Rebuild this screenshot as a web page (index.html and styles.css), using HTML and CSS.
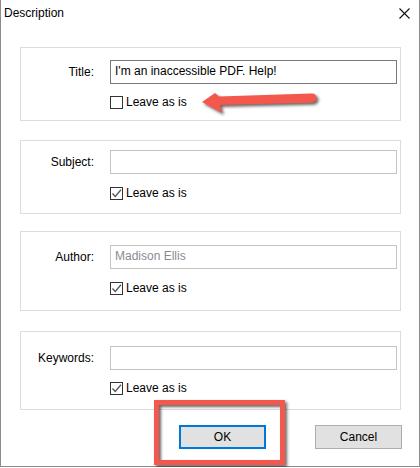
FILE: index.html
```html
<!DOCTYPE html>
<html>
<head>
<meta charset="utf-8">
<link rel="stylesheet" href="styles.css">
</head>
<body>
<div class="window">
  <div class="titlebar">
    <span class="title">Description</span>
    <svg class="close" width="11" height="11" viewBox="0 0 11 11"><path d="M0.5 0.5 L10.5 10.5 M10.5 0.5 L0.5 10.5" stroke="#111" stroke-width="1.1" fill="none"/></svg>
  </div>
  <div class="content">
    <div class="group g1">
      <span class="label">Title:</span>
      <div class="input input-active">I'm an inaccessible PDF. Help!</div>
      <div class="check-row"><span class="checkbox"></span><span>Leave as is</span></div>
    </div>
    <div class="group g2">
      <span class="label">Subject:</span>
      <div class="input"></div>
      <div class="check-row"><span class="checkbox"><svg width="11" height="11" viewBox="0 0 11 11"><path d="M1.5 5.5 L4.2 8.5 L10 1.8" stroke="#555" stroke-width="1.3" fill="none"/></svg></span><span>Leave as is</span></div>
    </div>
    <div class="group g3">
      <span class="label">Author:</span>
      <div class="input input-disabled">Madison Ellis</div>
      <div class="check-row"><span class="checkbox"><svg width="11" height="11" viewBox="0 0 11 11"><path d="M1.5 5.5 L4.2 8.5 L10 1.8" stroke="#555" stroke-width="1.3" fill="none"/></svg></span><span>Leave as is</span></div>
    </div>
    <div class="group g4">
      <span class="label">Keywords:</span>
      <div class="input"></div>
      <div class="check-row"><span class="checkbox"><svg width="11" height="11" viewBox="0 0 11 11"><path d="M1.5 5.5 L4.2 8.5 L10 1.8" stroke="#555" stroke-width="1.3" fill="none"/></svg></span><span>Leave as is</span></div>
    </div>
    <div class="buttons">
      <button class="btn btn-default">OK</button>
      <button class="btn">Cancel</button>
    </div>
  </div>
  <div class="highlight"></div>
  <svg class="arrow" width="140" height="40" viewBox="190 80 140 40">
    <path d="M202 102 L215 93 L219 96.5 L312 93.5 A4.6 4.6 0 0 1 312 102.7 L220 105 L222 113 Z" fill="#f4574b"/>
  </svg>
</div>
</body>
</html>
```
FILE: styles.css
```css
* { box-sizing: border-box; }
html, body { margin: 0; padding: 0; background: #fff; }
body {
  font-family: "Liberation Sans", Arial, sans-serif;
  font-size: 12px;
  color: #000;
}
.window {
  position: relative;
  width: 420px;
  height: 467px;
  border-left: 1px solid #8c8c8c;
  border-right: 1px solid #8c8c8c;
  border-bottom: 1px solid #8c8c8c;
  background: #fff;
}
.titlebar {
  height: 31px;
  display: flex;
  justify-content: space-between;
  align-items: flex-start;
  padding: 5px 9px 0 3px;
}
.title { line-height: 16px; }
.close { margin-top: 3px; }
.content {
  padding: 16px 18px 0 19px;
}
.group {
  border: 1px solid #dcdcdc;
  display: grid;
  grid-template-columns: 73px 287px;
  column-gap: 16px;
  align-items: center;
}
.g1 { padding: 12px 0 11px; row-gap: 12px; }
.g2 { padding: 9px 0 13px; row-gap: 13px; margin-top: 19px; }
.g3 { padding: 13px 0 15px; row-gap: 13px; margin-top: 17px; }
.g4 { padding: 14px 0 14px; row-gap: 12px; margin-top: 20px; }
.label {
  text-align: right;
  line-height: 16px;
}
.input {
  height: 24px;
  border: 1px solid #c4c4c4;
  padding: 0 4px;
  line-height: 21px;
  white-space: nowrap;
  overflow: hidden;
}
.input-active { border-color: #7a7a7a; }
.input-disabled { color: #8a8a94; }
.check-row {
  grid-column: 2;
  display: flex;
  align-items: center;
  gap: 3px;
  height: 13px;
  line-height: 13px;
}
.checkbox {
  width: 13px;
  height: 13px;
  border: 1px solid #333;
  background: #fff;
  display: flex;
  align-items: center;
  justify-content: center;
}
.buttons {
  display: flex;
  justify-content: flex-end;
  gap: 49px;
  margin-top: 15px;
  margin-right: -1px;
}
.btn {
  width: 87px;
  height: 24px;
  background: #e1e1e1;
  border: 1px solid #adadad;
  font-family: "Liberation Sans", Arial, sans-serif;
  font-size: 12px;
  color: #000;
  padding: 0;
  line-height: 20px;
}
.btn-default { border: 2px solid #0078d7; }
.highlight {
  position: absolute;
  left: 153px;
  top: 400px;
  width: 131px;
  height: 65px;
  border: 5px solid #f4574b;
  box-shadow: 2px 2px 3px rgba(0,0,0,0.6), inset 2px 2px 3px rgba(0,0,0,0.6);
}
.arrow {
  position: absolute;
  left: 189px;
  top: 80px;
  filter: drop-shadow(2px 2px 1.5px rgba(0,0,0,0.6));
}
```
